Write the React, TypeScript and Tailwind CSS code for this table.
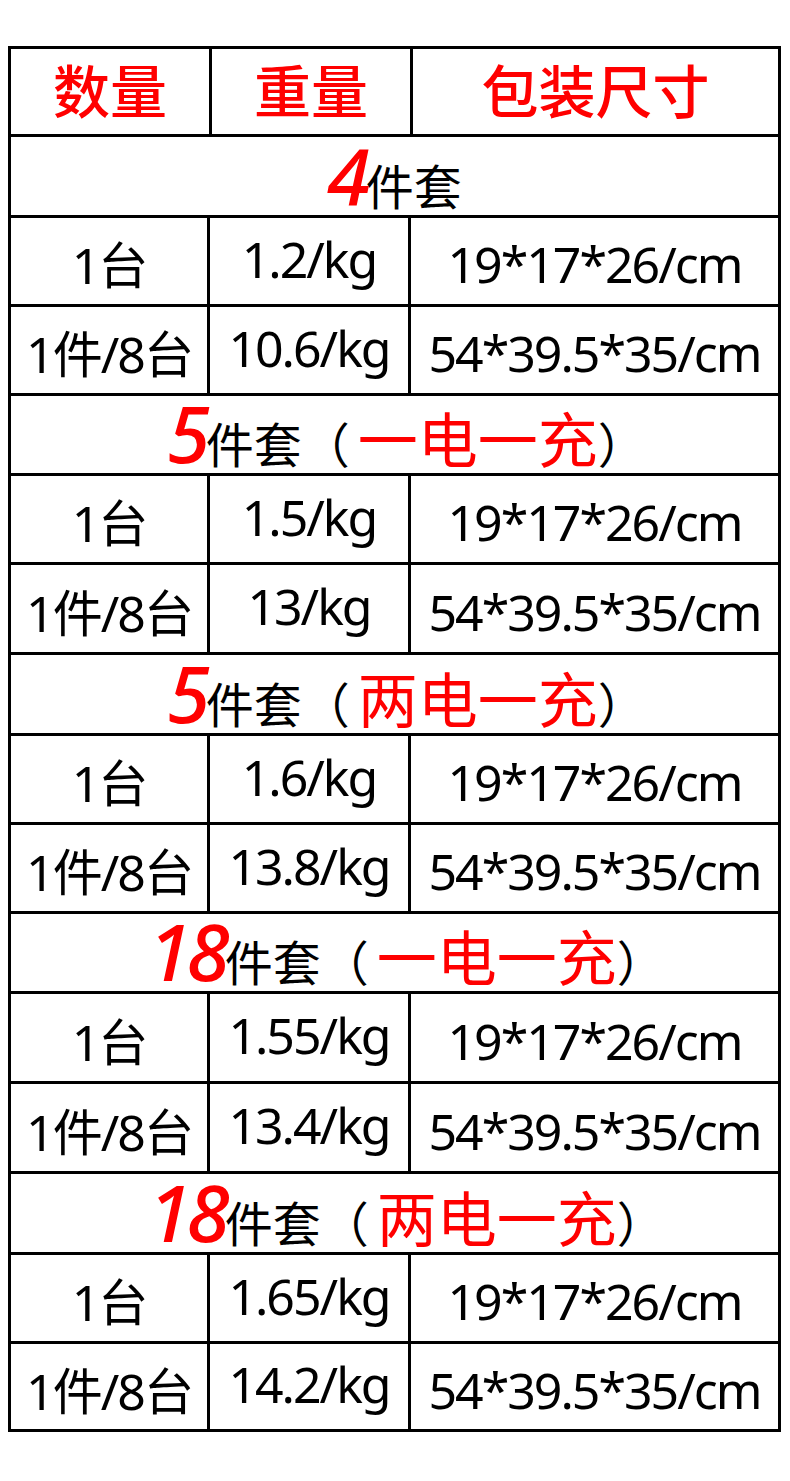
const FONT = "font-['Noto_Sans','Noto_Sans_CJK_SC',sans-serif]";

type Section = {
  num: string;
  extra: string | null;
  h: string;
  rows: { h: string; cells: [string, string, string] }[];
};

const sections: Section[] = [
  {
    num: "4",
    extra: null,
    h: "h-[81px]",
    rows: [
      { h: "h-[89px]", cells: ["1台", "1.2/kg", "19*17*26/cm"] },
      { h: "h-[89px]", cells: ["1件/8台", "10.6/kg", "54*39.5*35/cm"] },
    ],
  },
  {
    num: "5",
    extra: "一电一充",
    h: "h-[80px]",
    rows: [
      { h: "h-[89px]", cells: ["1台", "1.5/kg", "19*17*26/cm"] },
      { h: "h-[90px]", cells: ["1件/8台", "13/kg", "54*39.5*35/cm"] },
    ],
  },
  {
    num: "5",
    extra: "两电一充",
    h: "h-[81px]",
    rows: [
      { h: "h-[89px]", cells: ["1台", "1.6/kg", "19*17*26/cm"] },
      { h: "h-[89px]", cells: ["1件/8台", "13.8/kg", "54*39.5*35/cm"] },
    ],
  },
  {
    num: "18",
    extra: "一电一充",
    h: "h-[80px]",
    rows: [
      { h: "h-[90px]", cells: ["1台", "1.55/kg", "19*17*26/cm"] },
      { h: "h-[90px]", cells: ["1件/8台", "13.4/kg", "54*39.5*35/cm"] },
    ],
  },
  {
    num: "18",
    extra: "两电一充",
    h: "h-[81px]",
    rows: [
      { h: "h-[89px]", cells: ["1台", "1.65/kg", "19*17*26/cm"] },
      { h: "h-[88px]", cells: ["1件/8台", "14.2/kg", "54*39.5*35/cm"] },
    ],
  },
];

function SectionRow({ s }: { s: Section }) {
  return (
    <div className={`${s.h} flex items-end justify-center border-t-[3px] border-black pb-[1px]`}>
      <div className={`whitespace-nowrap text-[48px] leading-none text-black ${s.extra ? "pl-[24px]" : ""}`}>
        <span className="text-[78px] font-medium italic leading-none tracking-[-0.06em] text-[#ff0000]">{s.num}</span>
        <span className="leading-none">件套</span>
        {s.extra ? (
          <>
            <span className="leading-none">（</span>
            <span className="ml-[8px] text-[60px] leading-none text-[#ff0000]">{s.extra}</span>
            <span className="leading-none">）</span>
          </>
        ) : null}
      </div>
    </div>
  );
}

function DataRow({ h, cells }: { h: string; cells: [string, string, string] }) {
  return (
    <div className={`${h} grid grid-cols-[196px_201px_1fr] border-t-[3px] border-black text-[50px] leading-none tracking-[-0.04em] text-black`}>
      <div className="flex items-center justify-center pt-[8px]">{cells[0]}</div>
      <div className="flex items-center justify-center border-l-[3px] border-black pb-[5px]">{cells[1]}</div>
      <div className="flex items-center justify-center border-l-[3px] border-black pt-[6px]">{cells[2]}</div>
    </div>
  );
}

export default function App() {
  return (
    <div className={`min-h-screen bg-white pl-[8px] pt-[46px] ${FONT}`}>
      <div className="w-[773px] border-[3px] border-black">
        <div className="grid h-[85px] grid-cols-[198px_201px_1fr] text-[57px] font-medium leading-none text-[#ff0000]">
          <div className="flex items-center justify-center">数量</div>
          <div className="flex items-center justify-center border-l-[3px] border-black">重量</div>
          <div className="flex items-center justify-center border-l-[3px] border-black">包装尺寸</div>
        </div>
        {sections.map((s, i) => (
          <div key={i}>
            <SectionRow s={s} />
            {s.rows.map((r, j) => (
              <DataRow key={j} h={r.h} cells={r.cells} />
            ))}
          </div>
        ))}
      </div>
    </div>
  );
}
